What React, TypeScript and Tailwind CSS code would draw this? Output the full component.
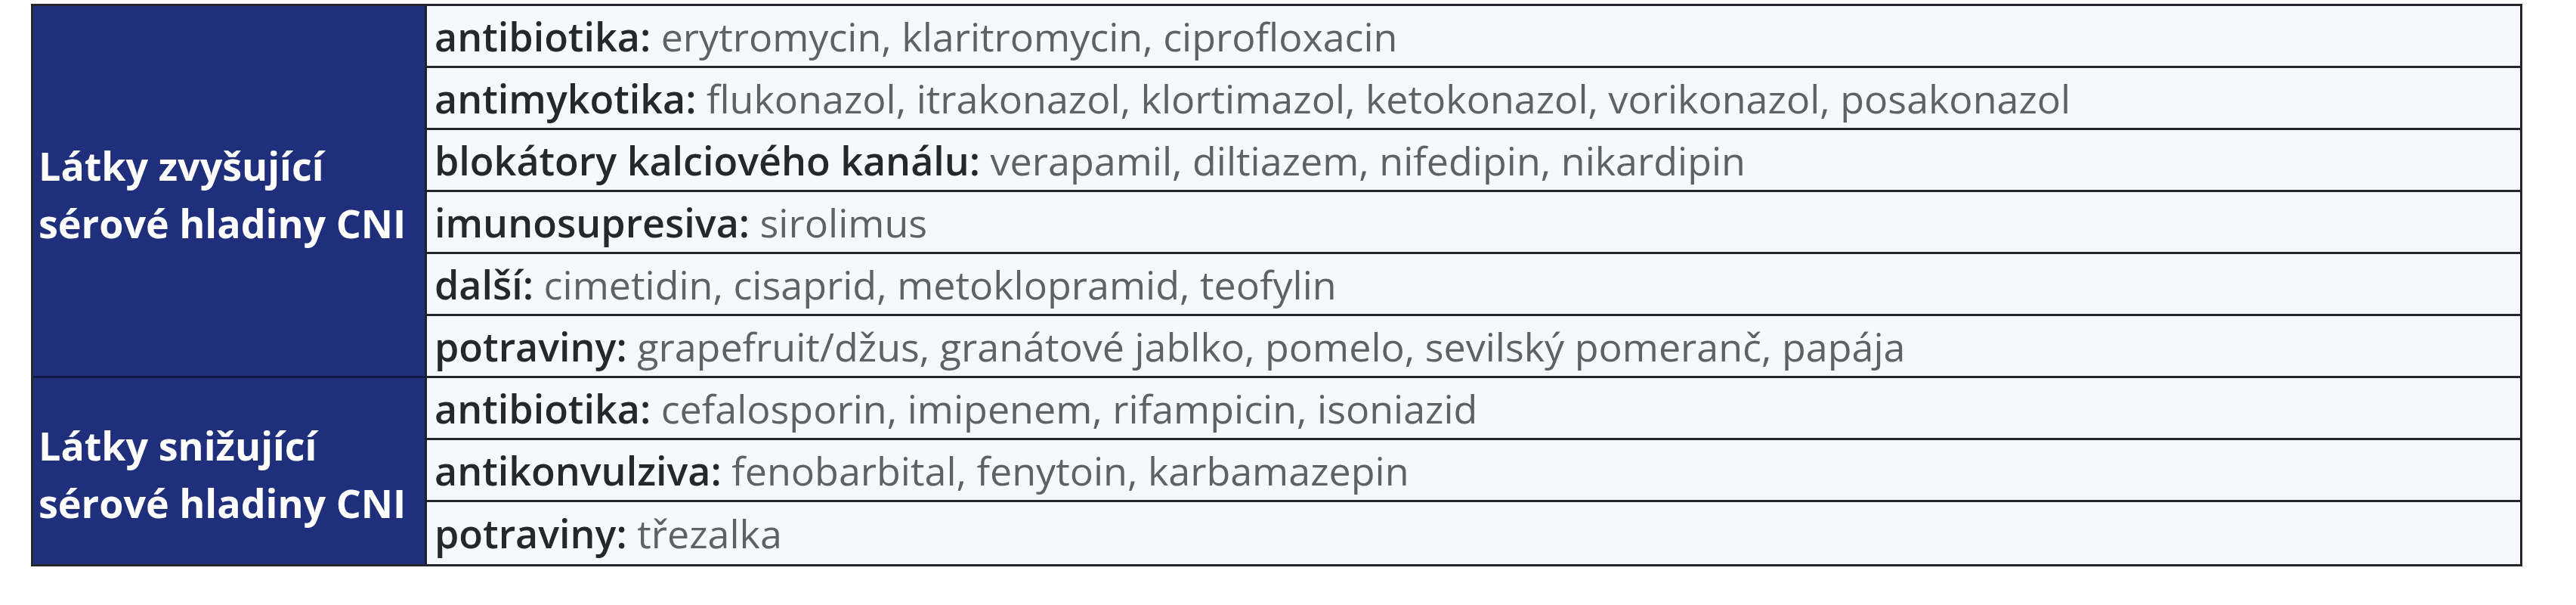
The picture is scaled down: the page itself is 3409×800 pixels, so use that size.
const increasing = [
  { label: "antibiotika:", items: "erytromycin, klaritromycin, ciprofloxacin" },
  {
    label: "antimykotika:",
    items:
      "flukonazol, itrakonazol, klortimazol, ketokonazol, vorikonazol, posakonazol",
  },
  {
    label: "blokátory kalciového kanálu:",
    items: "verapamil, diltiazem, nifedipin, nikardipin",
  },
  { label: "imunosupresiva:", items: "sirolimus" },
  { label: "další:", items: "cimetidin, cisaprid, metoklopramid, teofylin" },
  {
    label: "potraviny:",
    items:
      "grapefruit/džus, granátové jablko, pomelo, sevilský pomeranč, papája",
  },
];

const decreasing = [
  { label: "antibiotika:", items: "cefalosporin, imipenem, rifampicin, isoniazid" },
  { label: "antikonvulziva:", items: "fenobarbital, fenytoin, karbamazepin" },
  { label: "potraviny:", items: "třezalka" },
];

type Row = { label: string; items: string };

function GroupHeader({
  lines,
  rows,
  last,
}: {
  lines: [string, string];
  rows: number;
  last?: boolean;
}) {
  return (
    <div
      className={
        "flex flex-col justify-center border-r-[3px] border-r-[#1c2130] bg-[#1f2f7b] pl-[7px] pt-[8px] text-[52px] font-bold leading-[76px] text-white " +
        (last ? "" : "border-b-[3px] border-b-[#111a45]")
      }
      style={{ gridRow: `span ${rows} / span ${rows}` }}
    >
      <span>{lines[0]}</span>
      <span>{lines[1]}</span>
    </div>
  );
}

function Cell({ row, last }: { row: Row; last?: boolean }) {
  return (
    <div
      className={
        "flex items-center bg-[#f5f9fd] pl-[10px] text-[52px] leading-none whitespace-nowrap " +
        (last ? "" : "border-b-[3px] border-b-[#23272c]")
      }
    >
      <span>
        <span className="font-semibold text-[#24272b]">{row.label}</span>{" "}
        <span className="text-[#5e6166]">{row.items}</span>
      </span>
    </div>
  );
}

export default function App() {
  return (
    <div className="min-h-[800px] w-[3409px] bg-white pl-[41px] pt-[5px] font-['Open_Sans',sans-serif]">
      <div className="grid w-[3297px] grid-cols-[521px_1fr] grid-rows-[repeat(9,82px)] border-[3px] border-[#23272c]">
        <GroupHeader lines={["Látky zvyšující", "sérové hladiny CNI"]} rows={6} />
        <Cell row={increasing[0]} />
        {increasing.slice(1).map((r) => (
          <Cell key={r.label + r.items} row={r} />
        ))}
        <GroupHeader
          lines={["Látky snižující", "sérové hladiny CNI"]}
          rows={3}
          last
        />
        {decreasing.map((r, i) => (
          <Cell key={r.label + r.items} row={r} last={i === decreasing.length - 1} />
        ))}
      </div>
    </div>
  );
}
